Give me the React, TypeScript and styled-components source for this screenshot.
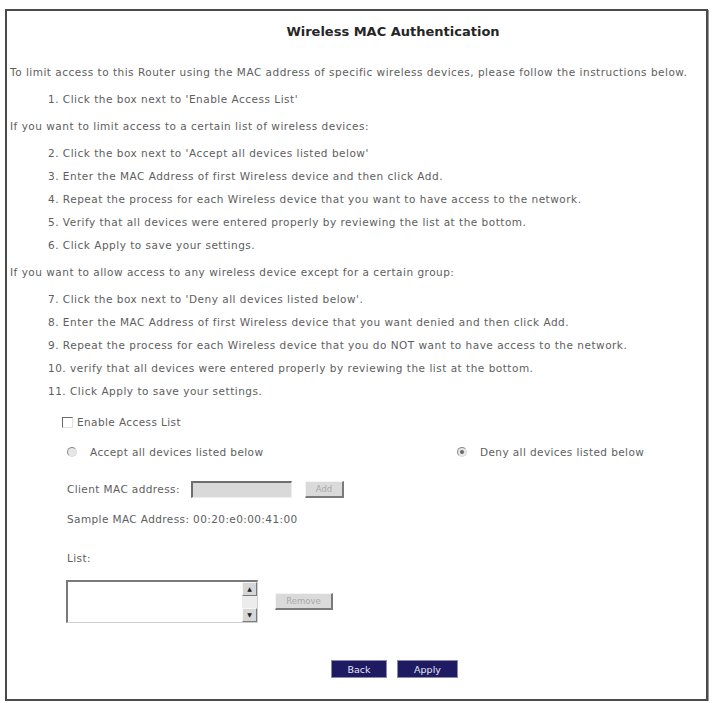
import React, { useState } from 'react';
import styled, { createGlobalStyle } from 'styled-components';

const GlobalStyle = createGlobalStyle`
  html, body {
    margin: 0;
    padding: 0;
    background: #ffffff;
  }
  body {
    font-family: "DejaVu Sans", Verdana, sans-serif;
  }
`;

const Frame = styled.div`
  box-sizing: border-box;
  width: 703px;
  height: 692px;
  margin: 9px 0 0 5px;
  border: 2px solid #4a4a4a;
  box-shadow: 1px 1px 0 #9a9a9a;
  padding: 0 0 0 3px;
`;

const Title = styled.h1`
  margin: 11px 0 0;
  padding-left: 70px;
  height: 20px;
  line-height: 20px;
  text-align: center;
  font-size: 13px;
  font-weight: 700;
  color: #262626;
`;

const Instructions = styled.div`
  margin-top: 19px;
  display: flex;
  flex-direction: column;
  gap: 4px;
`;

const Group = styled.div<{ $indent?: boolean }>`
  display: flex;
  flex-direction: column;
  padding-left: ${(p) => (p.$indent ? '38px' : '0')};
`;

const Line = styled.div`
  height: 23px;
  line-height: 23px;
  font-size: 10.5px;
  letter-spacing: 0.5px;
  color: #5e5e5e;
  white-space: nowrap;
`;

const Form = styled.div`
  display: flex;
  flex-direction: column;
  padding-left: 52px;
`;

const Row = styled.div<{ $top: number; $height?: number; $left?: number }>`
  display: flex;
  align-items: center;
  margin-top: ${(p) => p.$top}px;
  height: ${(p) => p.$height ?? 22}px;
  padding-left: ${(p) => p.$left ?? 0}px;
  font-size: 10.5px;
  letter-spacing: 0.4px;
  color: #5e5e5e;
  white-space: nowrap;
`;

const CheckBox = styled.span<{ $checked: boolean }>`
  box-sizing: border-box;
  width: 11px;
  height: 11px;
  margin-right: 4px;
  border-top: 1px solid #6a6a6a;
  border-left: 1px solid #6a6a6a;
  border-right: 1px solid #e2e2e2;
  border-bottom: 1px solid #e2e2e2;
  background: #fff;
  cursor: pointer;
  display: inline-flex;
  align-items: center;
  justify-content: center;
  font-size: 9px;
  color: #333;
`;

const Option = styled.label<{ $width?: number }>`
  display: flex;
  align-items: center;
  width: ${(p) => (p.$width ? `${p.$width}px` : 'auto')};
  cursor: pointer;
`;

const Radio = styled.span<{ $on: boolean }>`
  box-sizing: border-box;
  width: 10px;
  height: 10px;
  border-radius: 50%;
  margin-right: 13px;
  border: 1px solid #8a8a8a;
  border-right-color: #dcdcdc;
  border-bottom-color: #dcdcdc;
  background: #e6e6e6;
  display: flex;
  align-items: center;
  justify-content: center;
  &::after {
    content: '';
    width: 4px;
    height: 4px;
    border-radius: 50%;
    background: ${(p) => (p.$on ? '#6a6a6a' : 'transparent')};
  }
`;

const FieldLabel = styled.span`
  width: 124px;
`;

const MacInput = styled.input`
  box-sizing: border-box;
  width: 101px;
  height: 17px;
  padding: 0 3px;
  margin: 0 13px 0 0;
  background: #d9d9d9;
  border-top: 2px solid #6e6e6e;
  border-left: 2px solid #6e6e6e;
  border-right: 1px solid #efefef;
  border-bottom: 1px solid #efefef;
  font: 9.5px "DejaVu Sans", sans-serif;
  outline: none;
`;

const GreyButton = styled.button<{ $width: number }>`
  box-sizing: border-box;
  width: ${(p) => p.$width}px;
  height: 17px;
  padding: 0;
  background: #dadada;
  color: #a9a9a9;
  font: 8.5px "DejaVu Sans", sans-serif;
  border-top: 1px solid #f4f4f4;
  border-left: 1px solid #f4f4f4;
  border-right: 2px solid #7a7a7a;
  border-bottom: 2px solid #7a7a7a;
`;

const ListBox = styled.div`
  box-sizing: border-box;
  width: 192px;
  height: 43px;
  margin: 0 17px 0 -1px;
  display: flex;
  background: #fff;
  border-top: 2px solid #7a7a7a;
  border-left: 2px solid #7a7a7a;
  border-right: 1px solid #cfcfcf;
  border-bottom: 1px solid #cfcfcf;
`;

const ListArea = styled.div`
  flex: 1;
`;

const ScrollBar = styled.div`
  width: 15px;
  display: flex;
  flex-direction: column;
  justify-content: space-between;
  background: #ececec;
`;

const ScrollArrow = styled.div`
  box-sizing: border-box;
  height: 14px;
  background: #d6d6d6;
  border-top: 1px solid #f6f6f6;
  border-left: 1px solid #f6f6f6;
  border-right: 1px solid #7a7a7a;
  border-bottom: 1px solid #7a7a7a;
  display: flex;
  align-items: center;
  justify-content: center;
  font-size: 6px;
  letter-spacing: 0;
  color: #222;
`;

const ActionRow = styled.div`
  display: flex;
  justify-content: center;
  gap: 10px;
  margin-top: 37px;
  padding-left: 73px;
`;

const NavyButton = styled.button<{ $width: number }>`
  box-sizing: border-box;
  width: ${(p) => p.$width}px;
  height: 18px;
  padding: 0;
  background: #1f1b62;
  color: #e6e6f4;
  font: 9.5px "DejaVu Sans", sans-serif;
  border: 1px solid #8a89b0;
  cursor: pointer;
`;

const App = (): React.ReactElement => {
  const [enabled, setEnabled] = useState(false);
  const [mode, setMode] = useState<'accept' | 'deny'>('deny');
  const [mac, setMac] = useState('');

  return (
    <>
      <GlobalStyle />
      <Frame>
        <Title>Wireless MAC Authentication</Title>
        <Instructions>
          <Group>
            <Line>
              To limit access to this Router using the MAC address of specific wireless devices, please
              follow the instructions below.
            </Line>
          </Group>
          <Group $indent>
            <Line>1. Click the box next to 'Enable Access List'</Line>
          </Group>
          <Group>
            <Line>If you want to limit access to a certain list of wireless devices:</Line>
          </Group>
          <Group $indent>
            <Line>2. Click the box next to 'Accept all devices listed below'</Line>
            <Line>3. Enter the MAC Address of first Wireless device and then click Add.</Line>
            <Line>4. Repeat the process for each Wireless device that you want to have access to the network.</Line>
            <Line>5. Verify that all devices were entered properly by reviewing the list at the bottom.</Line>
            <Line>6. Click Apply to save your settings.</Line>
          </Group>
          <Group>
            <Line>If you want to allow access to any wireless device except for a certain group:</Line>
          </Group>
          <Group $indent>
            <Line>7. Click the box next to 'Deny all devices listed below'.</Line>
            <Line>8. Enter the MAC Address of first Wireless device that you want denied and then click Add.</Line>
            <Line>9. Repeat the process for each Wireless device that you do NOT want to have access to the network.</Line>
            <Line>10. verify that all devices were entered properly by reviewing the list at the bottom.</Line>
            <Line>11. Click Apply to save your settings.</Line>
          </Group>
        </Instructions>

        <Form>
          <Row $top={8} $left={0}>
            <CheckBox $checked={enabled} onClick={() => setEnabled(!enabled)}>
              {enabled ? '✓' : ''}
            </CheckBox>
            <span>Enable Access List</span>
          </Row>
          <Row $top={8} $left={5}>
            <Option $width={390} onClick={() => setMode('accept')}>
              <Radio $on={mode === 'accept'} />
              Accept all devices listed below
            </Option>
            <Option onClick={() => setMode('deny')}>
              <Radio $on={mode === 'deny'} />
              Deny all devices listed below
            </Option>
          </Row>
          <Row $top={15} $left={5}>
            <FieldLabel>Client MAC address:</FieldLabel>
            <MacInput value={mac} onChange={(e) => setMac(e.target.value)} disabled={!enabled} />
            <GreyButton $width={39}>Add</GreyButton>
          </Row>
          <Row $top={8} $left={5}>
            Sample MAC Address: 00:20:e0:00:41:00
          </Row>
          <Row $top={17} $left={5}>
            List:
          </Row>
          <Row $top={10} $height={44} $left={5}>
            <ListBox>
              <ListArea />
              <ScrollBar>
                <ScrollArrow>▲</ScrollArrow>
                <ScrollArrow>▼</ScrollArrow>
              </ScrollBar>
            </ListBox>
            <GreyButton $width={58}>Remove</GreyButton>
          </Row>
        </Form>

        <ActionRow>
          <NavyButton $width={56}>Back</NavyButton>
          <NavyButton $width={61}>Apply</NavyButton>
        </ActionRow>
      </Frame>
    </>
  );
};

export default App;
